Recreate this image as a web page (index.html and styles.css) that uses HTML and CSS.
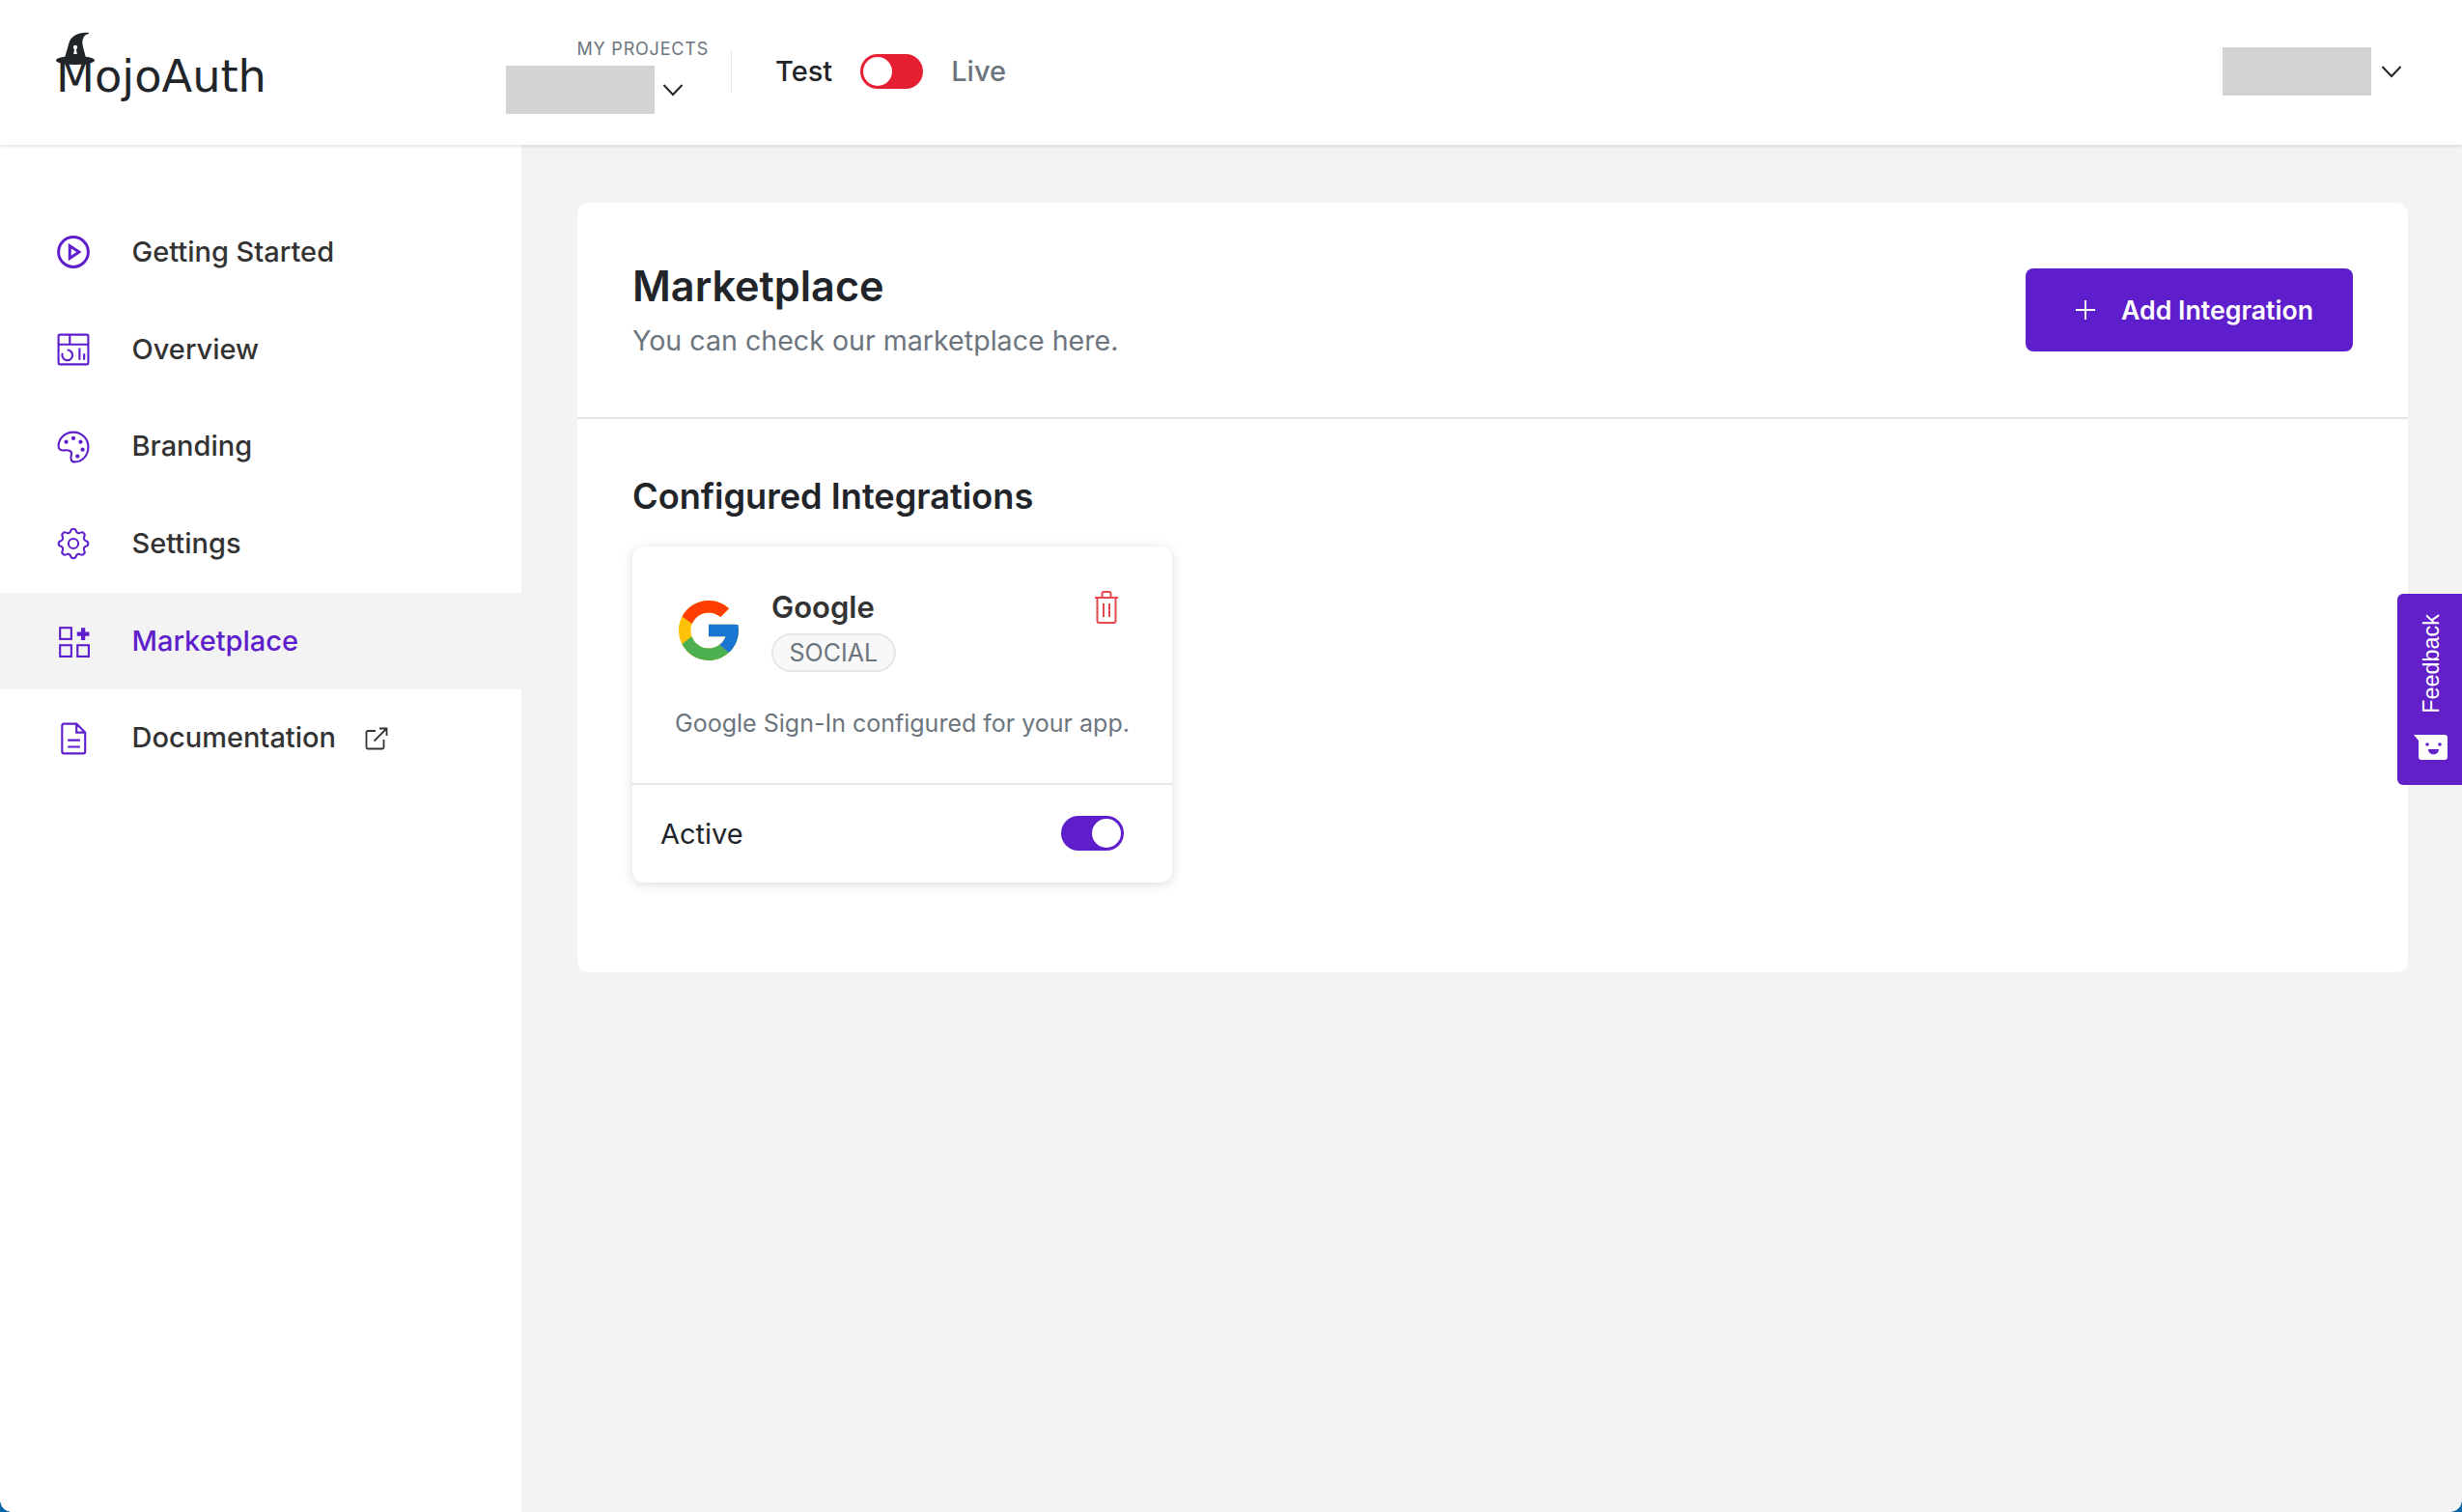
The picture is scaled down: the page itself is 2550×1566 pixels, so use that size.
FILE: index.html
```html
<!DOCTYPE html>
<html lang="en">
<head>
  <meta charset="UTF-8" />
  <meta name="viewport" content="width=device-width, initial-scale=1.0">
  <title>MojoAuth Marketplace</title>
  <link rel="stylesheet" href="styles.css">
</head>
<body>
  <header class="topbar">
    <a class="logo">
      <svg class="logo-hat" viewBox="0 0 40 35">
        <path fill="#212529" d="M34 1C24 0 15 4 13 13L9 27H31C29 18 26 12 28 7C29 4 31 2.500 34 2Z"/>
        <ellipse cx="20" cy="29.500" rx="20" ry="4.500" fill="#212529"/>
        <circle cx="20" cy="16" r="2.200" fill="#fff"/>
        <path fill="#fff" d="M19.200 17H20.800L21.800 23H18.200Z"/>
      </svg>
      <span class="logo-text">MojoAuth</span>
    </a>
    <div class="projects">
      <span class="projects-label">MY PROJECTS</span>
      <div class="projects-select">
        <span class="blur-box"></span>
        <svg class="chevron" viewBox="0 0 22 14"><path d="M1.5 2 11 12 20.5 2"/></svg>
      </div>
    </div>
    <div class="mode">
      <span class="mode-test">Test</span>
      <span class="switch switch-red"><span class="knob"></span></span>
      <span class="mode-live">Live</span>
    </div>
    <div class="account">
      <span class="blur-box"></span>
      <svg class="chevron" viewBox="0 0 22 14"><path d="M1.5 2 11 12 20.5 2"/></svg>
    </div>
  </header>

  <div class="layout">
    <nav class="sidebar">
      <a class="nav-item">
        <svg class="nav-icon icon-bold" viewBox="0 0 32 32"><circle cx="16" cy="16" r="14.5"/><path d="M12.5 10 21.500 16l-9 6Z"/></svg>
        <span>Getting Started</span>
      </a>
      <a class="nav-item">
        <svg class="nav-icon" viewBox="0 0 32 32"><rect x="1.500" y="1.500" width="29" height="29" rx="1"/><path d="M1.500 11h29M12.500 1.500V11M22 14.500V26M26.500 20v6M10 16.500a5 5 0 1 1-4.500 3"/></svg>
        <span>Overview</span>
      </a>
      <a class="nav-item">
        <svg class="nav-icon" viewBox="0 0 32 32"><path d="M16 1.500C7.500 1.500 1.500 8 1.500 15c0 4 3 4.500 6 4.200 4-.4 7.500.3 6.500 4.300-.8 3.500-.5 7 3 7C25 30.500 30.500 24 30.500 16 30.500 8 24 1.500 16 1.500Z"/><g class="dots"><circle cx="9" cy="11" r="2"/><circle cx="16" cy="7.500" r="2"/><circle cx="23" cy="11" r="2"/><circle cx="25" cy="18.500" r="2"/><circle cx="20" cy="25" r="2"/></g></svg>
        <span>Branding</span>
      </a>
      <a class="nav-item">
        <svg class="nav-icon icon-gear" viewBox="2 2 20 20"><path d="M10.325 4.317c.426-1.756 2.924-1.756 3.35 0a1.724 1.724 0 002.573 1.066c1.543-.94 3.31.826 2.37 2.37a1.724 1.724 0 001.065 2.572c1.756.426 1.756 2.924 0 3.35a1.724 1.724 0 00-1.066 2.573c.94 1.543-.826 3.31-2.37 2.37a1.724 1.724 0 00-2.572 1.065c-.426 1.756-2.924 1.756-3.35 0a1.724 1.724 0 00-2.573-1.066c-1.543.94-3.31-.826-2.37-2.37a1.724 1.724 0 00-1.065-2.572c-1.756-.426-1.756-2.924 0-3.35a1.724 1.724 0 001.066-2.573c-.94-1.543.826-3.31 2.37-2.37.996.608 2.296.07 2.572-1.065z"/><circle cx="12" cy="12" r="3"/></svg>
        <span>Settings</span>
      </a>
      <a class="nav-item active">
        <svg class="nav-icon" viewBox="0 0 32 32"><rect x="3" y="3" width="11" height="11"/><rect x="3" y="20" width="11" height="11"/><rect x="20" y="20" width="11" height="11"/><path class="thick" d="M25.500 3v12M19.500 9h12"/></svg>
        <span>Marketplace</span>
      </a>
      <a class="nav-item">
        <svg class="nav-icon" viewBox="0 0 32 32"><path d="M7 1.500H19L27.500 10V28.500a2 2 0 0 1-2 2H7a2 2 0 0 1-2-2V3.500a2 2 0 0 1 2-2ZM19 1.500V10H27.500M10.500 17.500h12M10.500 24h12"/></svg>
        <span>Documentation</span>
        <svg class="ext-icon" viewBox="0 0 24 24"><path d="M11 4H3a1.500 1.500 0 0 0-1.500 1.500V21A1.500 1.500 0 0 0 3 22.500h15a1.500 1.500 0 0 0 1.500-1.500V13M9.500 14.500 22.500 1.500M15 1.500h7.500V9"/></svg>
      </a>
    </nav>

    <main class="content">
      <section class="panel">
        <div class="panel-head">
          <div>
            <h1>Marketplace</h1>
            <p class="subtitle">You can check our marketplace here.</p>
          </div>
          <button class="btn-add">
            <svg viewBox="0 0 24 24"><path d="M12 1v22M1 12h22"/></svg>
            Add Integration
          </button>
        </div>
        <div class="panel-body">
          <h2>Configured Integrations</h2>
          <article class="card">
            <div class="card-top">
              <div class="card-title">
                <svg class="google" viewBox="4 4 40 40">
                  <path fill="#FFC107" d="M43.611 20.083H42V20H24v8h11.303c-1.649 4.657-6.08 8-11.303 8-6.627 0-12-5.373-12-12s5.373-12 12-12c3.059 0 5.842 1.154 7.961 3.039l5.657-5.657C34.046 6.053 29.268 4 24 4 12.955 4 4 12.955 4 24s8.955 20 20 20 20-8.955 20-20c0-1.341-.138-2.65-.389-3.917z"/>
                  <path fill="#FF3D00" d="M6.306 14.691l6.571 4.819C14.655 15.108 18.961 12 24 12c3.059 0 5.842 1.154 7.961 3.039l5.657-5.657C34.046 6.053 29.268 4 24 4 16.318 4 9.656 8.337 6.306 14.691z"/>
                  <path fill="#4CAF50" d="M24 44c5.166 0 9.86-1.977 13.409-5.192l-6.19-5.238C29.211 35.091 26.715 36 24 36c-5.202 0-9.619-3.317-11.283-7.946l-6.522 5.025C9.505 39.556 16.227 44 24 44z"/>
                  <path fill="#1976D2" d="M43.611 20.083H42V20H24v8h11.303c-.792 2.237-2.231 4.166-4.087 5.571l6.190 5.238C36.971 39.205 44 34 44 24c0-1.341-.138-2.650-.389-3.917z"/>
                </svg>
                <div>
                  <h3>Google</h3>
                  <span class="tag">SOCIAL</span>
                </div>
                <svg class="trash" viewBox="0 0 26 34"><path d="M1 7h24M3.500 7V31a2 2 0 0 0 2 2h15a2 2 0 0 0 2-2V7M8.500 7V3a2 2 0 0 1 2-2h5a2 2 0 0 1 2 2v4M10 13v14M16 13v14"/></svg>
              </div>
              <p class="card-desc">Google Sign-In configured for your app.</p>
            </div>
            <div class="card-foot">
              <span>Active</span>
              <span class="switch switch-purple"><span class="knob"></span></span>
            </div>
          </article>
        </div>
      </section>
    </main>
  </div>

  <aside class="feedback">
    <span class="feedback-text">Feedback</span>
    <svg viewBox="0 0 36 27"><path fill="#fff" d="M0 0H32a3 3 0 0 1 3 3V23a3 3 0 0 1-3 3H8a3 3 0 0 1-3-3V6Z"/><circle cx="14" cy="10" r="1.800" class="face"/><circle cx="27" cy="10" r="1.800" class="face"/><path class="face" d="M15 15H26C26 22 15 22 15 15Z"/></svg>
  </aside>
  <div class="corner corner-left"></div>
  <div class="corner corner-right"></div>
</body>
</html>
```

FILE: styles.css
```css
* {
  box-sizing: border-box;
}
html, body {
  height: 100%;
}
body {
  margin: 0;
  height: 1566px;
  overflow: hidden;
  font-family: Inter, "Liberation Sans", sans-serif;
  background: #f3f3f3;
  color: #333;
  display: flex;
  flex-direction: column;
}

/* top bar */
.topbar {
  height: 150px;
  flex: none;
  background: #fff;
  display: flex;
  align-items: flex-start;
  box-shadow: 0 2px 3px rgba(0,0,0,0.1);
  position: relative;
  z-index: 2;
}
.logo {
  width: 524px;
  flex: none;
  padding: 31px 0 0 58px;
  position: relative;
}
.logo-text {
  display: block;
  font-family: "DejaVu Sans", sans-serif;
  font-size: 46.3px;
  line-height: 96px;
  color: #212529;
}
.logo-hat {
  position: absolute;
  left: 58px;
  top: 33px;
  width: 40px;
  height: 35px;
}
.projects {
  width: 233px;
  flex: none;
  padding-top: 41px;
}
.projects-label {
  display: block;
  width: 210px;
  text-align: right;
  font-size: 18px;
  line-height: 20px;
  letter-spacing: 0.8px;
  color: #6c757d;
}
.projects-select {
  display: flex;
  align-items: center;
  gap: 8px;
  margin-top: 7px;
}
.blur-box {
  display: block;
  width: 154px;
  height: 50px;
  background: #d3d3d3;
  flex: none;
}
.chevron {
  width: 22px;
  height: 14px;
  fill: none;
  stroke: #212529;
  stroke-width: 2;
}
.mode {
  display: flex;
  align-items: center;
  height: 44px;
  margin-top: 52px;
  padding-left: 45px;
  border-left: 1px solid #e6e6e6;
  font-size: 29px;
  font-weight: 500;
}
.mode-test {
  color: #212529;
  margin-bottom: 2px;
}
.mode-live {
  color: #6c757d;
  margin-bottom: 2px;
}
.switch {
  display: flex;
  align-items: center;
  width: 65px;
  height: 36px;
  border-radius: 18px;
  padding: 3px;
  flex: none;
}
.knob {
  display: block;
  width: 30px;
  height: 30px;
  border-radius: 50%;
  background: #fff;
}
.switch-red {
  background: #e61e32;
  margin: 0 29px 0 29px;
}
.switch-purple {
  background: #5f1ecb;
  justify-content: flex-end;
  margin-top: -2px;
}
.account {
  margin-left: auto;
  margin-top: 49px;
  margin-right: 62px;
  display: flex;
  align-items: center;
  gap: 10px;
}

/* sidebar */
.layout {
  flex: 1;
  display: flex;
  min-height: 0;
}
.sidebar {
  width: 540px;
  flex: none;
  background: #fff;
  padding-top: 61px;
}
.nav-item {
  display: flex;
  align-items: center;
  height: 100.7px;
  padding-left: 59px;
  font-size: 29px;
  font-weight: 500;
  color: #333;
}
.nav-item span {
  margin-bottom: 2px;
}
.nav-item.active {
  background: #f3f3f3;
  color: #5f1ecb;
}
.nav-icon {
  width: 34px;
  height: 34px;
  margin-right: 43.5px;
  fill: none;
  stroke: #5f1ecb;
  stroke-width: 2;
  flex: none;
}
.nav-icon.icon-bold {
  stroke-width: 2.8;
}
.nav-icon.icon-gear {
  stroke-width: 1.2;
}
.nav-icon .dots {
  fill: #5f1ecb;
  stroke: none;
}
.nav-icon .thick {
  stroke-width: 4;
}
.ext-icon {
  width: 24px;
  height: 24px;
  margin-left: 30px;
  fill: none;
  stroke: #333;
  stroke-width: 1.800;
}

/* content */
.content {
  flex: 1;
  padding: 60px 56px 0 58px;
}
.panel {
  background: #fff;
  border-radius: 12px;
  height: 797px;
}
.panel-head {
  height: 224px;
  padding: 56px 57px 0;
  display: flex;
  justify-content: space-between;
  align-items: flex-start;
  border-bottom: 2px solid #e3e3e8;
}
h1 {
  margin: 0 0 5px;
  font-size: 43.2px;
  line-height: 60px;
  font-weight: 600;
  color: #212529;
}
.subtitle {
  margin: 0;
  font-size: 28.6px;
  line-height: 44px;
  color: #6c757d;
}
.btn-add {
  width: 339px;
  height: 86px;
  margin-top: 12px;
  padding: 0 0 0 51px;
  border: none;
  border-radius: 8px;
  background: #5f1ecb;
  color: #fff;
  font-family: inherit;
  font-size: 26.700px;
  font-weight: 600;
  display: flex;
  align-items: center;
  gap: 26px;
}
.btn-add svg {
  width: 22px;
  height: 22px;
  fill: none;
  stroke: #fff;
  stroke-width: 2;
}
.panel-body {
  padding: 54px 57px 0;
}
h2 {
  margin: 0 0 26px;
  font-size: 36.15px;
  line-height: 52px;
  font-weight: 600;
  color: #212529;
}
.card {
  width: 559px;
  height: 348px;
  border-radius: 12px;
  background: #fff;
  box-shadow: 0 2px 12px rgba(0,0,0,0.14);
  display: flex;
  flex-direction: column;
}
.card-top {
  height: 247px;
  border-bottom: 2px solid #e6e6e6;
  padding: 44px 30px 0 44px;
}
.card-title {
  display: flex;
  align-items: flex-start;
}
.google {
  width: 62px;
  height: 62px;
  margin: 12px 34px 0 4px;
  flex: none;
}
h3 {
  margin: -3px 0 0;
  font-size: 31px;
  line-height: 44px;
  font-weight: 600;
  color: #333;
}
.tag {
  display: inline-block;
  margin-top: 5px;
  padding: 0 16.500px;
  height: 40px;
  line-height: 36px;
  font-size: 25px;
  color: #6c757d;
  background: #f8f8f8;
  border: 2px solid #e6e6e6;
  border-radius: 20px;
}
.trash {
  width: 26px;
  height: 34px;
  margin: 2px 25px 0 auto;
  fill: none;
  stroke: #e5484d;
  stroke-width: 2;
}
.card-desc {
  margin: 33px 0 0 -44px;
  width: 559px;
  text-align: center;
  font-size: 25px;
  line-height: 40px;
  color: #6c757d;
}
.card-foot {
  flex: 1;
  display: flex;
  align-items: center;
  justify-content: space-between;
  padding: 0 50px 0 29px;
  font-size: 29px;
  color: #212529;
}

/* feedback tab */
.feedback {
  position: fixed;
  right: 0;
  top: 615px;
  width: 67px;
  height: 198px;
  background: #6420c8;
  border-radius: 6px 0 0 6px;
  display: flex;
  flex-direction: column;
  align-items: center;
  padding: 21px 0 0 2px;
}
.feedback-text {
  writing-mode: vertical-rl;
  transform: rotate(180deg);
  font-family: "Liberation Sans", Arial, sans-serif;
  font-size: 23.4px;
  line-height: 30px;
  color: #fff;
}
.feedback svg {
  width: 36px;
  height: 27px;
  margin-top: 22px;
}
.feedback .face {
  fill: #6420c8;
}

/* desktop showing through the rounded window corners */
.corner {
  position: fixed;
  bottom: 0;
  width: 12px;
  height: 12px;
}
.corner-left {
  left: 0;
  background: radial-gradient(circle at 100% 0, transparent 11.500px, #0a66a8 12px);
}
.corner-right {
  right: 0;
  background: radial-gradient(circle at 0 0, transparent 11.500px, #0a66a8 12px);
}
```
